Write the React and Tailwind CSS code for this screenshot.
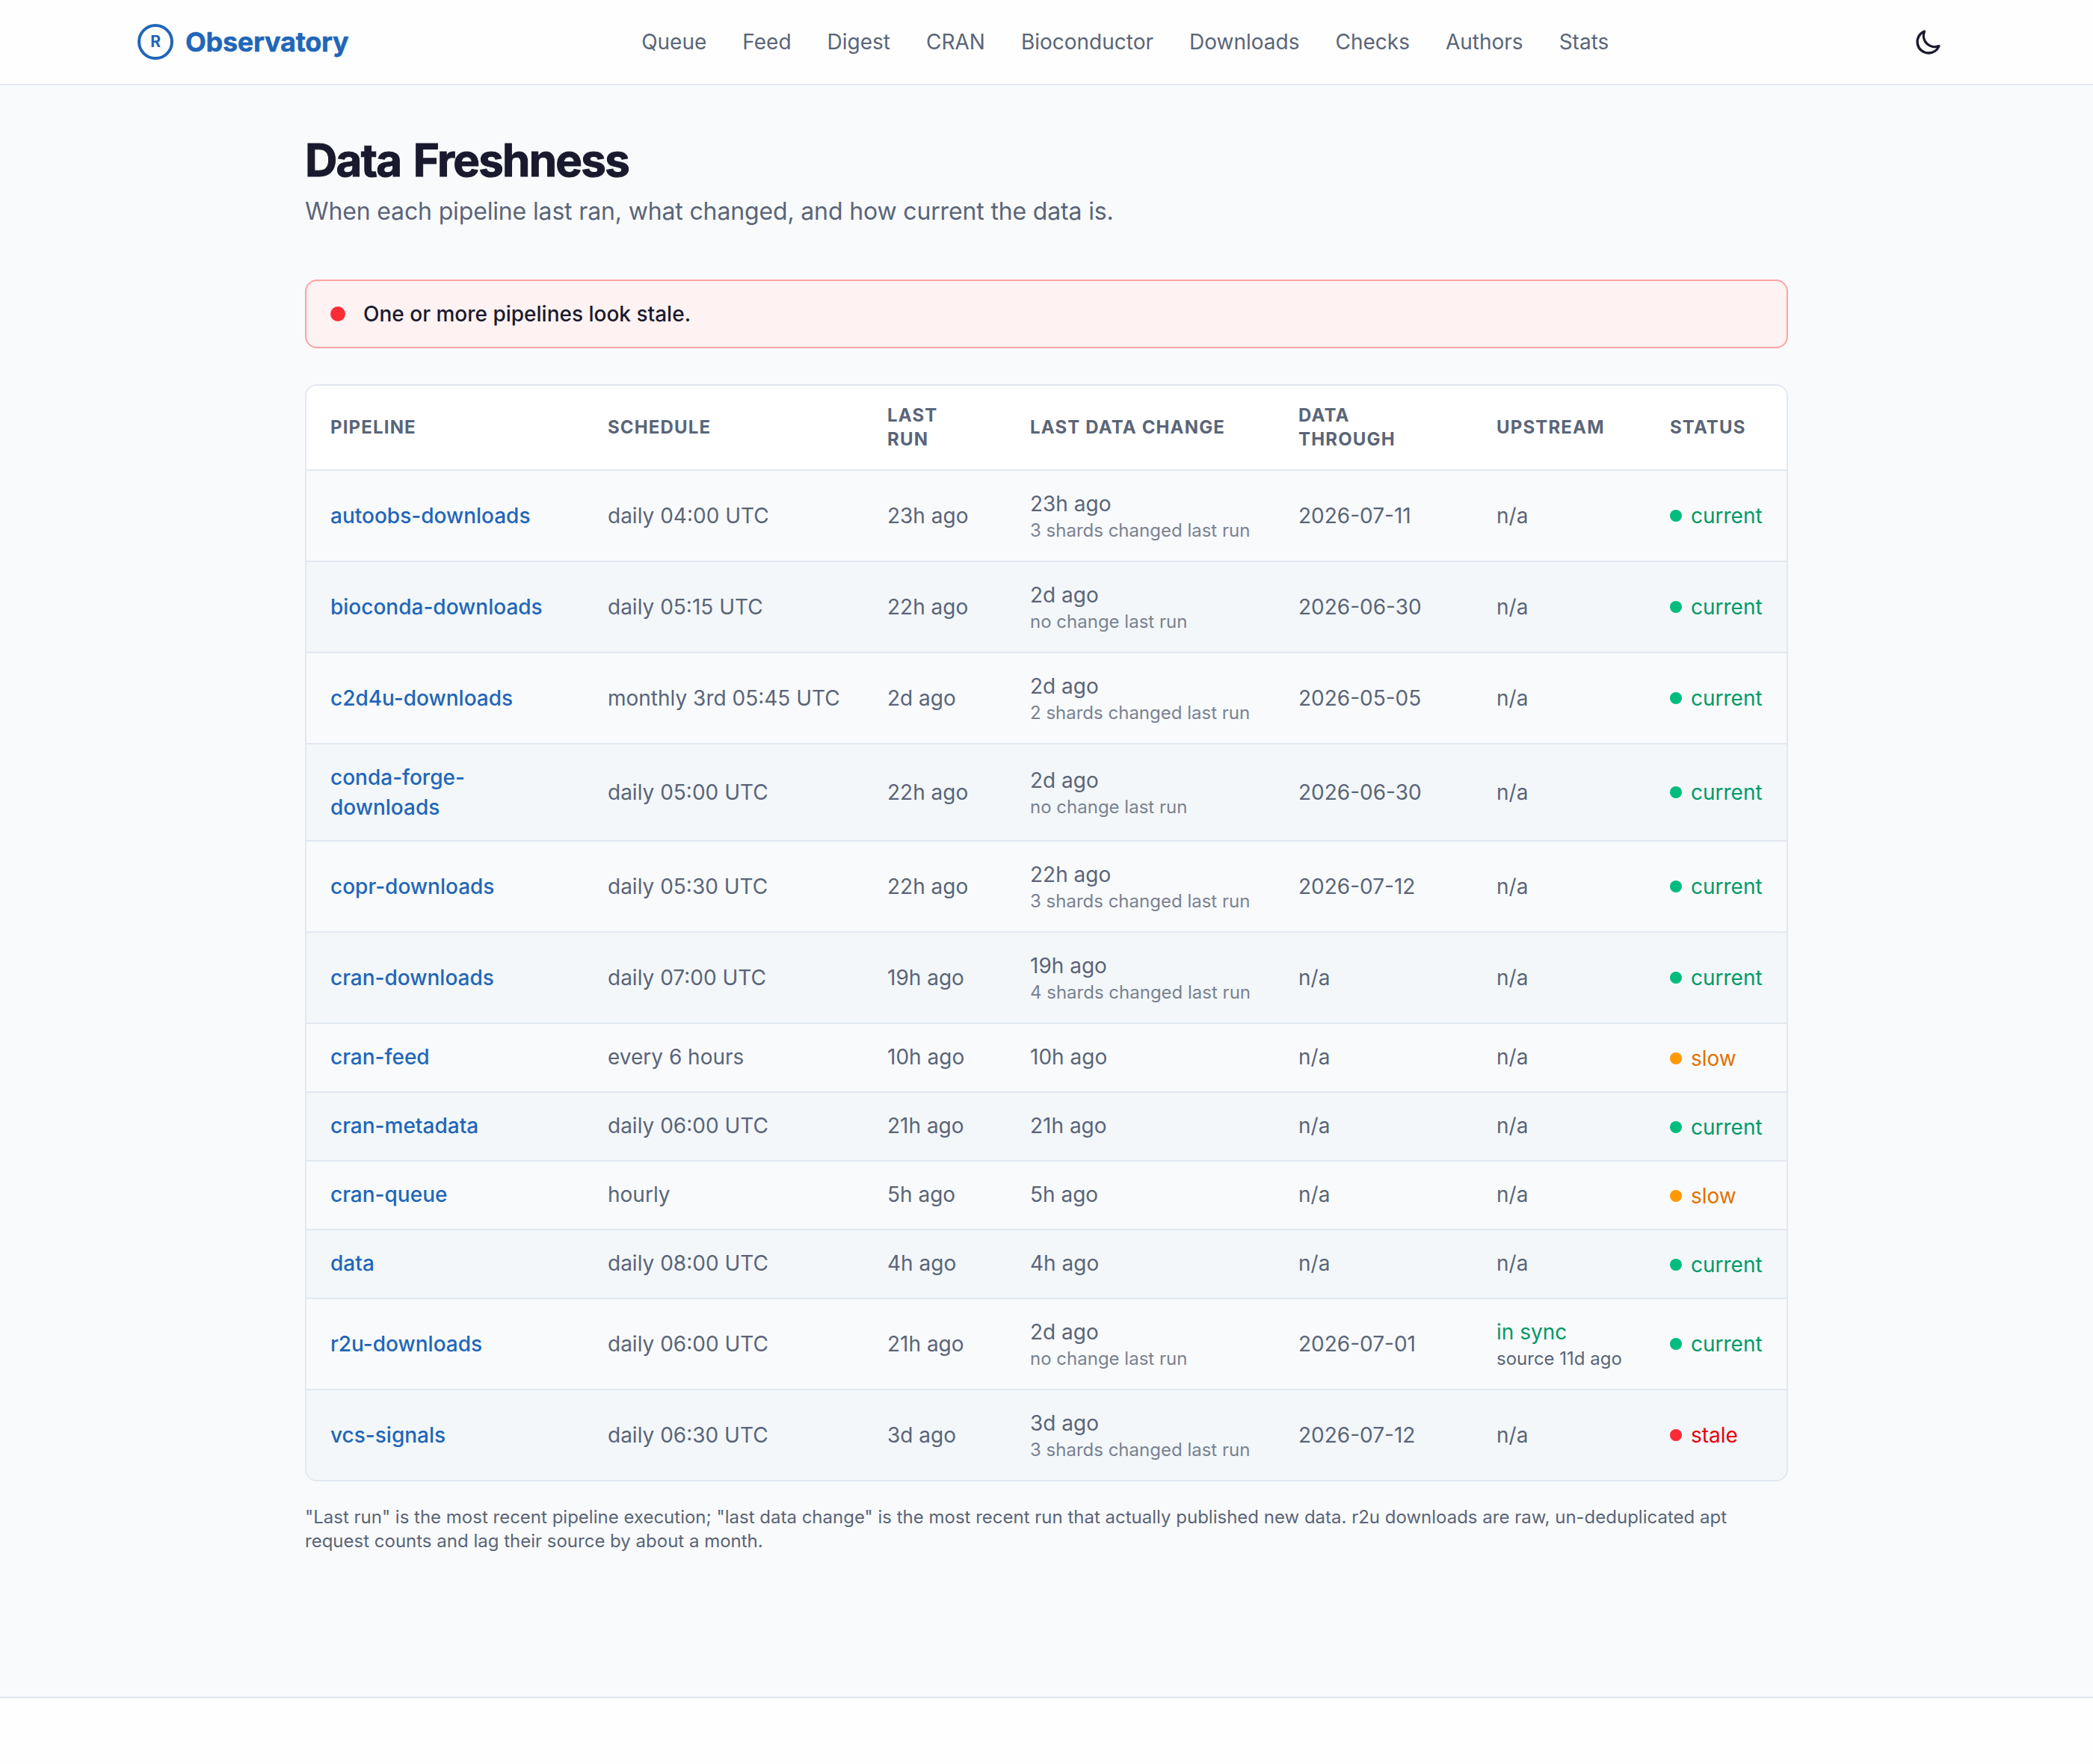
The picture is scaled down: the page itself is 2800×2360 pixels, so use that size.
const navLinks = ['Queue', 'Feed', 'Digest', 'CRAN', 'Bioconductor', 'Downloads', 'Checks', 'Authors', 'Stats'];

const columns = ['Pipeline', 'Schedule', 'Last run', 'Last data change', 'Data through', 'Upstream', 'Status'];

const pipelines = [
  { name: 'autoobs-downloads', schedule: 'daily 04:00 UTC', lastRun: '23h ago', changed: '23h ago', note: '3 shards changed last run', through: '2026-07-11', status: 'current' },
  { name: 'bioconda-downloads', schedule: 'daily 05:15 UTC', lastRun: '22h ago', changed: '2d ago', note: 'no change last run', through: '2026-06-30', status: 'current' },
  { name: 'c2d4u-downloads', schedule: 'monthly 3rd 05:45 UTC', lastRun: '2d ago', changed: '2d ago', note: '2 shards changed last run', through: '2026-05-05', status: 'current' },
  { name: 'conda-forge-downloads', schedule: 'daily 05:00 UTC', lastRun: '22h ago', changed: '2d ago', note: 'no change last run', through: '2026-06-30', status: 'current' },
  { name: 'copr-downloads', schedule: 'daily 05:30 UTC', lastRun: '22h ago', changed: '22h ago', note: '3 shards changed last run', through: '2026-07-12', status: 'current' },
  { name: 'cran-downloads', schedule: 'daily 07:00 UTC', lastRun: '19h ago', changed: '19h ago', note: '4 shards changed last run', status: 'current' },
  { name: 'cran-feed', schedule: 'every 6 hours', lastRun: '10h ago', changed: '10h ago', status: 'slow' },
  { name: 'cran-metadata', schedule: 'daily 06:00 UTC', lastRun: '21h ago', changed: '21h ago', status: 'current' },
  { name: 'cran-queue', schedule: 'hourly', lastRun: '5h ago', changed: '5h ago', status: 'slow' },
  { name: 'data', schedule: 'daily 08:00 UTC', lastRun: '4h ago', changed: '4h ago', status: 'current' },
  { name: 'r2u-downloads', schedule: 'daily 06:00 UTC', lastRun: '21h ago', changed: '2d ago', note: 'no change last run', through: '2026-07-01', upstream: { label: 'in sync', source: 'source 11d ago' }, status: 'current' },
  { name: 'vcs-signals', schedule: 'daily 06:30 UTC', lastRun: '3d ago', changed: '3d ago', note: '3 shards changed last run', through: '2026-07-12', status: 'stale' },
];

const statusStyles = {
  current: { dot: 'bg-emerald-500', text: 'text-emerald-600' },
  slow: { dot: 'bg-amber-500', text: 'text-amber-600' },
  stale: { dot: 'bg-red-500', text: 'text-red-600' },
};

function Header() {
  return (
    <header className="border-b-2 border-[#e2e8f0] bg-[#fefefe]">
      <div className="mx-auto flex h-28 max-w-[2560px] items-center justify-between px-16">
        <a href="#" className="flex items-center gap-4 text-[36px] leading-[56px] font-bold tracking-[-0.25px] text-[#2166b8]">
          <svg viewBox="0 0 48 48" className="size-12" fill="none">
            <circle cx="24" cy="24" r="22" stroke="currentColor" strokeWidth="4" />
            <text x="24.2" y="31" textAnchor="middle" fontSize="21" fontWeight="700" letterSpacing="0" fill="currentColor">
              R
            </text>
          </svg>
          <span className="[-webkit-text-stroke:0.5px_currentColor]">Observatory</span>
        </a>

        <nav className="flex items-center gap-12 text-[28px] leading-10 text-[#5a6578]">
          {navLinks.map((link) => (
            <a key={link} href="#">{link}</a>
          ))}
        </nav>

        <button className="p-4 text-[#1a1a2e]" aria-label="Toggle theme">
          <svg viewBox="0 0 24 24" className="size-10" fill="none" stroke="currentColor" strokeWidth="2" strokeLinecap="round" strokeLinejoin="round">
            <path d="M20.354 15.354A9 9 0 0 1 8.646 3.646 9.003 9.003 0 0 0 12 21a9.003 9.003 0 0 0 8.354-5.646z" />
          </svg>
        </button>
      </div>
    </header>
  );
}

function Status({ value }) {
  const style = statusStyles[value];
  return (
    <span className={`flex items-center gap-3 ${style.text}`}>
      <span className={`size-4 rounded-full ${style.dot}`} />
      {value}
    </span>
  );
}

function PipelineRow({ row }) {
  const cell = row.note ? 'px-8 py-6' : 'px-8 pt-6 pb-[26px]';
  const statusCell = row.note ? 'px-8 py-6' : 'px-8 pt-[26px] pb-6';

  return (
    <tr className="border-t-2 border-[#e2e8f0] even:bg-[#f3f7fa]">
      <td className={`${cell} font-medium`}>
        <a href="#" className="text-[#2166b8]">{row.name}</a>
      </td>
      <td className={`${cell} whitespace-nowrap`}>{row.schedule}</td>
      <td className={`${cell} whitespace-nowrap`}>{row.lastRun}</td>
      <td className={`${cell} whitespace-nowrap`}>
        {row.changed}
        {row.note && <div className="text-2xl leading-8 opacity-80">{row.note}</div>}
      </td>
      <td className={`${cell} whitespace-nowrap`}>{row.through || 'n/a'}</td>
      <td className={`${cell} whitespace-nowrap`}>
        {row.upstream ? (
          <>
            <span className="text-emerald-600">{row.upstream.label}</span>
            <div className="text-2xl leading-8">{row.upstream.source}</div>
          </>
        ) : (
          'n/a'
        )}
      </td>
      <td className={`${statusCell} whitespace-nowrap`}>
        <Status value={row.status} />
      </td>
    </tr>
  );
}

function App() {
  return (
    <div className="min-h-[2360px] bg-[#fefefe] font-['Inter',sans-serif] text-[#1a1a2e] antialiased">
      <Header />

      <div className="h-[2158px] border-b-2 border-[#e2e8f0] bg-[#f9fafc]">
        <main className="mx-auto max-w-[2048px] px-8 pt-16">
          <h1 className="text-6xl leading-[72px] font-bold tracking-[-1.75px] [word-spacing:4px] [-webkit-text-stroke:1px_currentColor]">
            Data Freshness
          </h1>
          <p className="mt-[9px] text-[32px] leading-[48px] tracking-[-0.15px] text-[#5a6578]">
            When each pipeline last ran, what changed, and how current the data is.
          </p>

          {/* Overall health */}
          <div className="mt-[67px] flex items-center gap-6 rounded-2xl border-2 border-red-300 bg-red-50 px-8 py-6">
            <span className="size-5 rounded-full bg-red-500" />
            <span className="text-[28px] leading-10 font-medium">One or more pipelines look stale.</span>
          </div>

          <div className="mt-12 overflow-hidden rounded-2xl border-2 border-[#e2e8f0]">
            <table className="w-full table-fixed text-left text-[28px] leading-10 text-[#5a6578]">
              <colgroup>
                <col className="w-[371px]" />
                <col className="w-[374px]" />
                <col className="w-[191px]" />
                <col className="w-[359px]" />
                <col className="w-[265px]" />
                <col className="w-[232px]" />
                <col />
              </colgroup>
              <thead className="bg-white text-2xl leading-8 tracking-[1.15px] uppercase">
                <tr>
                  {columns.map((column) => (
                    <th key={column} className="px-8 py-6 font-bold">{column}</th>
                  ))}
                </tr>
              </thead>
              <tbody>
                {pipelines.map((row) => (
                  <PipelineRow key={row.name} row={row} />
                ))}
              </tbody>
            </table>
          </div>

          <p className="mt-8 text-2xl leading-8 text-[#5a6578]">
            "Last run" is the most recent pipeline execution; "last data change" is the most recent run that actually
            published new data. r2u downloads are raw, un-deduplicated apt request counts and lag their source by about a month.
          </p>
        </main>
      </div>
    </div>
  );
}

export default App;
